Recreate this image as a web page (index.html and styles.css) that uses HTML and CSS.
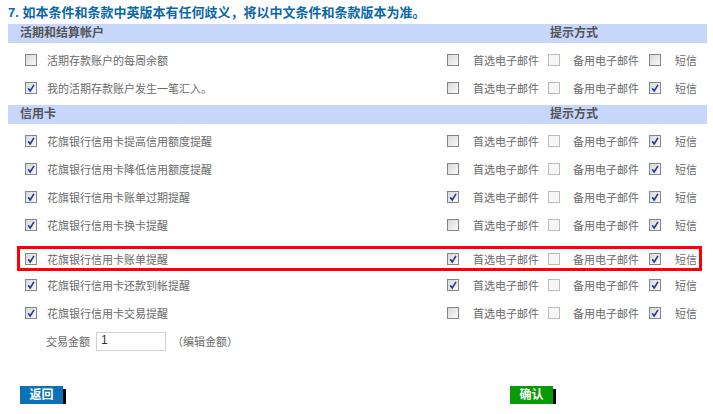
FILE: index.html
```html
<!DOCTYPE html>
<html lang="zh-CN">
<head>
  <meta charset="UTF-8" />
  <title>提示设置</title>
  <link rel="stylesheet" href="styles.css">
</head>
<body>

  <h3 class="notice">7. 如本条件和条款中英版本有任何歧义，将以中文条件和条款版本为准。</h3>

  <!-- 活期和结算帐户 -->
  <div class="bar">
    <span>活期和结算帐户</span>
    <span>提示方式</span>
  </div>
  <div class="rows">
    <div class="row">
      <span class="cb"></span>
      <span>活期存款账户的每周余额</span>
      <span class="cb"></span><span>首选电子邮件</span>
      <span class="cb off"></span><span>备用电子邮件</span>
      <span class="cb"></span><span>短信</span>
    </div>
    <div class="row">
      <span class="cb on"><svg viewBox="0 0 10 10"><path d="M2.2 5.2 L4.2 8 L8 1.8"/></svg></span>
      <span>我的活期存款账户发生一笔汇入。</span>
      <span class="cb"></span><span>首选电子邮件</span>
      <span class="cb off"></span><span>备用电子邮件</span>
      <span class="cb on"><svg viewBox="0 0 10 10"><path d="M2.2 5.2 L4.2 8 L8 1.8"/></svg></span><span>短信</span>
    </div>
  </div>

  <!-- 信用卡 -->
  <div class="bar">
    <span>信用卡</span>
    <span>提示方式</span>
  </div>
  <div class="rows">
    <div class="row">
      <span class="cb on"><svg viewBox="0 0 10 10"><path d="M2.2 5.2 L4.2 8 L8 1.8"/></svg></span>
      <span>花旗银行信用卡提高信用额度提醒</span>
      <span class="cb"></span><span>首选电子邮件</span>
      <span class="cb off"></span><span>备用电子邮件</span>
      <span class="cb on"><svg viewBox="0 0 10 10"><path d="M2.2 5.2 L4.2 8 L8 1.8"/></svg></span><span>短信</span>
    </div>
    <div class="row">
      <span class="cb on"><svg viewBox="0 0 10 10"><path d="M2.2 5.2 L4.2 8 L8 1.8"/></svg></span>
      <span>花旗银行信用卡降低信用额度提醒</span>
      <span class="cb"></span><span>首选电子邮件</span>
      <span class="cb off"></span><span>备用电子邮件</span>
      <span class="cb on"><svg viewBox="0 0 10 10"><path d="M2.2 5.2 L4.2 8 L8 1.8"/></svg></span><span>短信</span>
    </div>
    <div class="row">
      <span class="cb on"><svg viewBox="0 0 10 10"><path d="M2.2 5.2 L4.2 8 L8 1.8"/></svg></span>
      <span>花旗银行信用卡账单过期提醒</span>
      <span class="cb on"><svg viewBox="0 0 10 10"><path d="M2.2 5.2 L4.2 8 L8 1.8"/></svg></span><span>首选电子邮件</span>
      <span class="cb off"></span><span>备用电子邮件</span>
      <span class="cb on"><svg viewBox="0 0 10 10"><path d="M2.2 5.2 L4.2 8 L8 1.8"/></svg></span><span>短信</span>
    </div>
    <div class="row">
      <span class="cb on"><svg viewBox="0 0 10 10"><path d="M2.2 5.2 L4.2 8 L8 1.8"/></svg></span>
      <span>花旗银行信用卡换卡提醒</span>
      <span class="cb"></span><span>首选电子邮件</span>
      <span class="cb off"></span><span>备用电子邮件</span>
      <span class="cb on"><svg viewBox="0 0 10 10"><path d="M2.2 5.2 L4.2 8 L8 1.8"/></svg></span><span>短信</span>
    </div>
    <div class="row hl">
      <span class="cb on"><svg viewBox="0 0 10 10"><path d="M2.2 5.2 L4.2 8 L8 1.8"/></svg></span>
      <span>花旗银行信用卡账单提醒</span>
      <span class="cb on"><svg viewBox="0 0 10 10"><path d="M2.2 5.2 L4.2 8 L8 1.8"/></svg></span><span>首选电子邮件</span>
      <span class="cb off"></span><span>备用电子邮件</span>
      <span class="cb on"><svg viewBox="0 0 10 10"><path d="M2.2 5.2 L4.2 8 L8 1.8"/></svg></span><span>短信</span>
    </div>
    <div class="row">
      <span class="cb on"><svg viewBox="0 0 10 10"><path d="M2.2 5.2 L4.2 8 L8 1.8"/></svg></span>
      <span>花旗银行信用卡还款到帐提醒</span>
      <span class="cb on"><svg viewBox="0 0 10 10"><path d="M2.2 5.2 L4.2 8 L8 1.8"/></svg></span><span>首选电子邮件</span>
      <span class="cb off"></span><span>备用电子邮件</span>
      <span class="cb on"><svg viewBox="0 0 10 10"><path d="M2.2 5.2 L4.2 8 L8 1.8"/></svg></span><span>短信</span>
    </div>
    <div class="row">
      <span class="cb on"><svg viewBox="0 0 10 10"><path d="M2.2 5.2 L4.2 8 L8 1.8"/></svg></span>
      <span>花旗银行信用卡交易提醒</span>
      <span class="cb"></span><span>首选电子邮件</span>
      <span class="cb off"></span><span>备用电子邮件</span>
      <span class="cb on"><svg viewBox="0 0 10 10"><path d="M2.2 5.2 L4.2 8 L8 1.8"/></svg></span><span>短信</span>
    </div>
    <div class="amount">
      <span>交易金额</span>
      <span class="field">1</span>
      <span>（编辑金额）</span>
    </div>
  </div>

  <div class="actions">
    <span class="btn back">返回</span>
    <span class="btn ok">确认</span>
  </div>

</body>
</html>
```

FILE: styles.css
```css
body {
  margin: 0;
  padding: 0 6px 0 8px;
  font-family: "Liberation Sans", "Noto Sans CJK SC", sans-serif;
  font-size: 11px;
  color: #6a6a6a;
  background: #fff;
}
.notice {
  margin: 0;
  padding-top: 5px;
  height: 16px;
  line-height: 16px;
  font-size: 13px;
  font-weight: bold;
  color: #0b67a6;
}
.bar {
  margin-top: 3px;
  height: 19px;
  line-height: 19px;
  background: #c7d7fb;
  display: grid;
  grid-template-columns: 530px auto;
  padding-left: 12px;
  font-size: 12px;
  font-weight: bold;
  color: #555;
}
.rows {
  padding-top: 3px;
}
.row {
  height: 28px;
  display: grid;
  grid-template-columns: 22px 400px 26px 75px 25px 76px 26px auto;
  align-items: center;
  padding-left: 17px;
}
.row.hl {
  box-sizing: border-box;
  height: 25px;
  margin: 7px 5px 0 9px;
  padding-left: 5px;
  border: 3px solid #f00;
}
.cb {
  box-sizing: border-box;
  width: 12px;
  height: 12px;
  border: 1px solid #858585;
  background: linear-gradient(135deg, #d8d8d8, #fafafa);
  display: flex;
  align-items: center;
  justify-content: center;
}
.cb.off {
  border-color: #bcbcbc;
  background: #f6f6f6;
}
.cb svg {
  width: 10px;
  height: 10px;
}
.cb svg path {
  fill: none;
  stroke: #263d8e;
  stroke-width: 1.6;
}
.amount {
  height: 28px;
  display: flex;
  align-items: center;
  padding-left: 38px;
}
.field {
  box-sizing: border-box;
  width: 70px;
  height: 19px;
  line-height: 15px;
  margin: 1px 6px 0 6px;
  padding-left: 4px;
  border: 1px solid #cdd2dc;
  color: #333;
  font-size: 12px;
}
.actions {
  margin-top: 31px;
  padding-left: 12px;
  display: flex;
  gap: 447px;
}
.btn {
  width: 43px;
  height: 18px;
  line-height: 18px;
  text-align: center;
  color: #fff;
  font-size: 12px;
  font-weight: bold;
  box-shadow: 3px 3px 0 #000;
  cursor: pointer;
}
.btn.back {
  background: #0a72b5;
}
.btn.ok {
  background: #079b07;
}
```
